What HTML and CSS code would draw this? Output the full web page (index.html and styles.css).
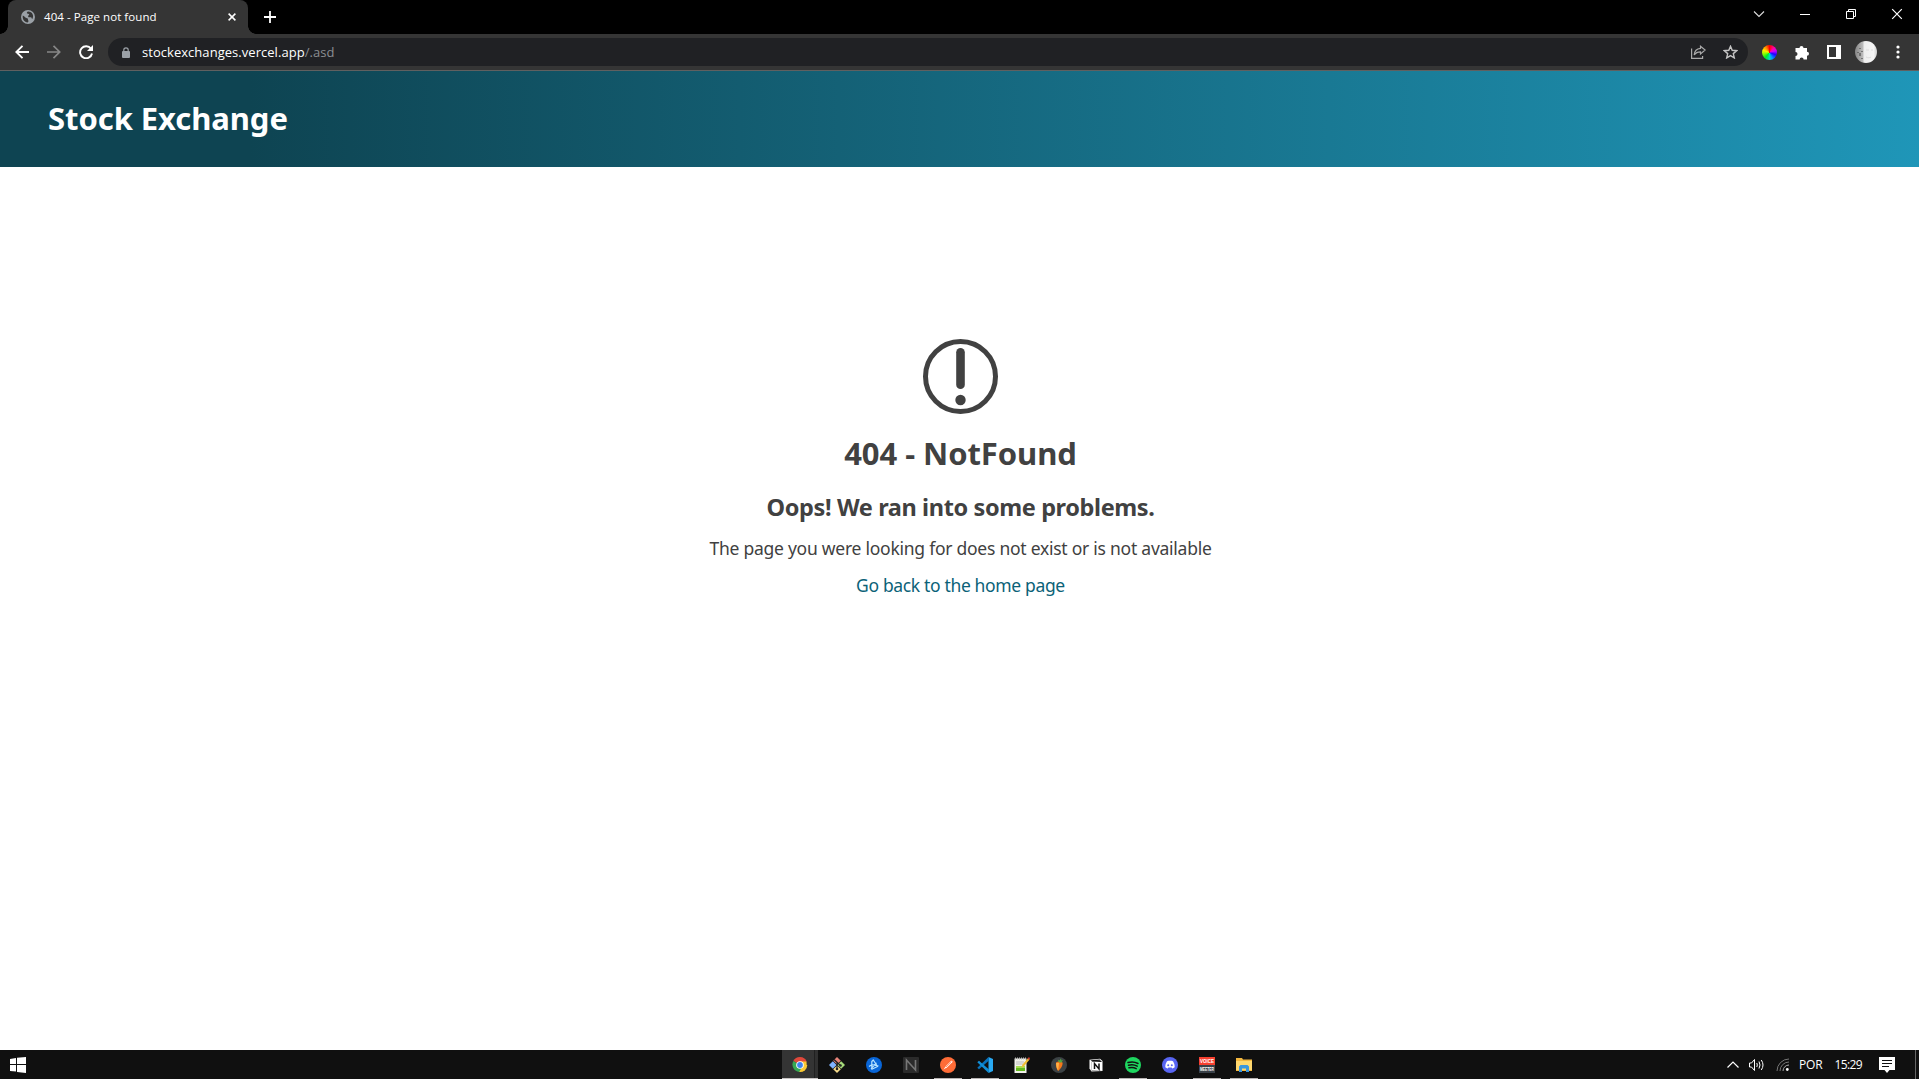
FILE: index.html
```html
<!DOCTYPE html>
<html lang="en">
<head>
<meta charset="utf-8">
<title>404 - Page not found</title>
<link rel="stylesheet" href="styles.css">
</head>
<body>
<div class="tabstrip">
  <div class="tab">
    <svg class="globe" width="14" height="14" viewBox="0 0 14 14"><circle cx="7" cy="7" r="7" fill="#9aa0a6"/><path d="M1.8 5.5C4 6.5 4.2 8 6 8.2c1.6.2.6 1.6 1.3 2.2.7.5-.3 1.5-.6 2.1C3.300 12.300 1.200 9 1.800 5.500ZM6.500 1.700c2-.4 4.300.7 5.100 2.600.8 1.800.5 3.500-.3 4.800-.7-.4-.6-1.500-1.400-1.800-1.200-.4-2.200.3-2.700-.6-.5-.9.8-1.400 1-2.200.1-.8-2.300-.5-2.400-1.500 0-.6.4-.9.7-1.300Z" fill="#353535"/></svg>
    <span class="tab-title">404 - Page not found</span>
    <svg class="tab-close" width="8" height="8" viewBox="0 0 8 8"><path d="M.6.600l6.800 6.800M7.400.600.600 7.400" stroke="#fff" stroke-width="1.500"/></svg>
  </div>
  <svg class="new-tab" width="12" height="12" viewBox="0 0 12 12"><path d="M6 0v12M0 6h12" stroke="#fff" stroke-width="1.800"/></svg>
  <div class="window-controls">
    <svg width="46" height="28" viewBox="0 0 46 28"><path d="M18 11.500l5 5 5-5" fill="none" stroke="#ddd" stroke-width="1.100"/></svg>
    <svg width="46" height="28" viewBox="0 0 46 28"><path d="M18 14.500h10" stroke="#fff"/></svg>
    <svg width="46" height="28" viewBox="0 0 46 28"><path d="M18.500 11.500h7v7h-7zM20.500 11.500v-2h7v7h-2" fill="none" stroke="#fff"/></svg>
    <svg width="46" height="28" viewBox="0 0 46 28"><path d="M18.200 9.200l9.600 9.600M27.800 9.200l-9.600 9.600" stroke="#fff" stroke-width="1.200"/></svg>
  </div>
</div>
<div class="toolbar">
  <svg width="14" height="14" viewBox="0 0 14 14"><path d="M14 7H1.500M7.500.800 1.300 7l6.200 6.200" fill="none" stroke="#fff" stroke-width="1.900"/></svg>
  <svg width="14" height="14" viewBox="0 0 14 14"><path d="M0 7h12.500M6.500.800 12.700 7l-6.200 6.200" fill="none" stroke="#878787" stroke-width="1.700"/></svg>
  <svg width="14" height="14" viewBox="0 0 14 14"><path d="M12 3.800A6 6 0 1 0 13 8.500" fill="none" stroke="#fff" stroke-width="1.900"/><path d="M14 0v6H8z" fill="#fff"/></svg>
  <div class="omnibox">
    <svg width="8" height="11" viewBox="0 0 8 11"><path d="M1.800 4.500V3a2.200 2.200 0 0 1 4.400 0v1.500" fill="none" stroke="#9aa0a6" stroke-width="1.200"/><rect y="4" width="8" height="7" rx="1" fill="#9aa0a6"/></svg>
    <span class="url">stockexchanges.vercel.app<span class="path">/.asd</span></span>
    <svg class="share" width="15" height="14" viewBox="0 0 15 14"><path d="M.6 3.500v9.900h11V11" fill="none" stroke="#aaa" stroke-width="1.200"/><path d="M9.500 1.200 14.200 5 9.500 8.900V6.800C6.500 6.800 4.700 7.600 3.200 10 3.500 6.200 5.600 3.600 9.500 3.300z" fill="none" stroke="#aaa" stroke-width="1.200"/></svg>
    <svg width="15" height="14" viewBox="0 0 15 14"><path d="M7.500 1.300l1.700 4 4.400.4-3.300 2.900 1 4.300-3.800-2.300-3.800 2.300 1-4.300-3.300-2.900 4.400-.4z" fill="none" stroke="#c4c4c4" stroke-width="1.400"/></svg>
  </div>
  <div class="extensions">
    <div class="wheel"></div>
    <svg class="puzzle" width="15" height="15" viewBox="0 0 15 15"><path d="M1 3h3.500a2 2 0 1 1 4 0H12v3.800a2 2 0 1 1 0 4V14.500H8.600a2 2 0 0 0-4 0H.500v-3.600a2 2 0 0 0 0-4V3z" fill="#fff"/></svg>
    <svg class="panel" width="14" height="14" viewBox="0 0 14 14"><path fill="#fff" fill-rule="evenodd" d="M0 0h14v14H0zM2 2v10h7V2z"/></svg>
    <svg class="avatar" width="22" height="22" viewBox="0 0 22 22"><defs><linearGradient id="face"><stop stop-color="#858585"/><stop offset=".35" stop-color="#bbb"/><stop offset=".42" stop-color="#eee"/><stop offset=".85" stop-color="#f6f6f6"/><stop offset="1" stop-color="#ccc"/></linearGradient></defs><circle cx="11" cy="11" r="11" fill="url(#face)"/><path d="M5 7v1M5 12v3M7 17v1M3 11v1M7 10v1" stroke="#555" stroke-width="1.300"/><path d="M11 9h3M16 9h2M11 16c2 1 4 1 5 0" stroke="#ddd" fill="none"/></svg>
    <svg width="4" height="14" viewBox="0 0 4 14" fill="#fff"><circle cx="2" cy="2" r="1.600"/><circle cx="2" cy="7" r="1.600"/><circle cx="2" cy="12" r="1.600"/></svg>
  </div>
</div>
<header class="site-header"><span class="brand">Stock Exchange</span></header>
<main class="content">
  <svg width="75" height="75" viewBox="0 0 75 75"><circle cx="37.500" cy="37.500" r="35" fill="none" stroke="#414141" stroke-width="5"/><rect x="33.200" y="9" width="8.600" height="41" rx="4.300" fill="#414141"/><circle cx="37.500" cy="61" r="5.200" fill="#414141"/></svg>
  <h1 class="code">404 - NotFound</h1>
  <h2 class="oops">Oops! We ran into some problems.</h2>
  <p class="detail">The page you were looking for does not exist or is not available</p>
  <a class="home-link">Go back to the home page</a>
</main>
<footer class="taskbar">
  <svg class="start" width="16" height="16" viewBox="0 0 16 16" fill="#fff"><path d="M0 2l6-1v6H0zM7 .800 16 0v7H7zM0 8h6v6.500L0 14zM7 8h9v8l-9-1z"/></svg>
  <div class="apps">
    <div class="app active"><svg width="16" height="16" viewBox="0 0 16 16"><path d="M8 8 1.300 4A7.500 7.500 0 0 1 14.700 4.500z" fill="#e0483b"/><path d="M8 8h7.200A7 7 0 0 1 7 15z" fill="#fbc934"/><path d="M8 8H14.700L14.500 4.500H8z" fill="#fbc934"/><path d="M8 8 1.300 4A7.500 7.500 0 0 0 7.200 15L10 10z" fill="#37a853"/><circle cx="8" cy="8" r="3.800" fill="#fff"/><circle cx="8" cy="8" r="2.900" fill="#3f84ee"/></svg></div>
    <div class="app"><svg width="16" height="16" viewBox="0 0 16 16"><path d="M8 0l3.800 3.800L8 7.600 4.200 3.800z" fill="#e78379"/><path d="M3.800 4.200 7.600 8l-3.800 3.800L0 8z" fill="#80b3ff"/><path d="M12.200 4.200 16 8l-3.800 3.800L8.400 8z" fill="#a6d979"/><path d="M8 8.400l3.800 3.800L8 16l-3.800-3.800z" fill="#f7dc8b"/><path d="M5 2.500 11.500 8.500M8 5v7" stroke="#222" stroke-width="1.300"/><circle cx="8" cy="12" r="1.300" fill="#222"/><circle cx="11.500" cy="8.500" r="1.300" fill="#222"/></svg></div>
    <div class="app"><svg width="16" height="16" viewBox="0 0 16 16"><circle cx="8" cy="8" r="8" fill="#0966d8"/><path d="M5.800 12.200V4.500L7.300 3l4.200 6.500zM3 9.500l2.800-1.800 6.700 1.300M5 11.800l5.500-6" fill="none" stroke="#b9e4ff" stroke-width="1.200" stroke-linejoin="round"/></svg></div>
    <div class="app"><svg width="16" height="16" viewBox="0 0 16 16"><rect width="16" height="16" rx="1" fill="#2b2b2b"/><path d="M3.500 13V3l9 10V3" fill="none" stroke="#777" stroke-width="1.600"/></svg></div>
    <div class="app open"><svg width="16" height="16" viewBox="0 0 16 16"><circle cx="8" cy="8" r="8" fill="#ff6c37"/><path d="M3.500 12.500 6 9l5-5c1-.8 2 .2 1.300 1.200L7.200 10.200z" fill="#fff"/><path d="M6 10l5.500-5.300" stroke="#ff6c37" stroke-width=".7"/></svg></div>
    <div class="app open"><svg width="16" height="16" viewBox="0 0 16 16"><path d="M11.500 0 16 2v12l-4.500 2z" fill="#29a9f2"/><path d="M12 3.500 2 12.200.300 10.700 11.500 0z" fill="#0873bd"/><path d="M12 12.500 2 3.800.300 5.300 11.500 16z" fill="#118fd7"/></svg></div>
    <div class="app"><svg width="16" height="16" viewBox="0 0 16 16"><path d="M.5 1.500h12V16H.500z" fill="#f1f1e9"/><path d="M1 1.500h12" stroke="#bbb" stroke-width="2" stroke-dasharray="1 1"/><path d="M2 5h8M2 7h7" stroke="#bbb"/><path d="M2 9h9v5H2z" fill="#62b91d"/><path d="M2 9h9v2H2z" fill="#a8dc52"/><path d="M7.500 10.500l1-3L14 1.200l1.600 1.400L10 9.200z" fill="#efbd32"/><path d="M13.500 1.500 15 0l1 1.500-1 1.500z" fill="#c7372c"/></svg></div>
    <div class="app"><svg width="16" height="16" viewBox="0 0 16 16"><circle cx="8" cy="8" r="8" fill="#3c4245"/><path d="M5 5.500C6.500 4 10 4 11.500 5.500c.6 3-2 6.500-4.500 8.500-1.500-2-2.500-6-2-8.500z" fill="#f5781b"/><path d="M5.200 6c-.3 3 .8 6 2 7.500L8 6z" fill="#ffb347"/><path d="M8 5.500 6.800 2.500 8.500 3.500 10 1.500l.3 2 1.700-.5-1.500 2.500z" fill="#52a843"/></svg></div>
    <div class="app"><svg width="14" height="14" viewBox="0 0 14 14"><path d="M.5 1.800.500 10.500 2.500 13.500l11-.5V3L11 .800z" fill="#fff"/><path d="M2.800 3.500 12.500 3v9.200l-9.700.5z" fill="#111"/><path d="M3 4h10v8.500H3z" fill="#fff"/><path d="M1.500 2.300 10.700 1.500 12 2.700 3 3.200z" fill="#111"/><path d="M5.500 11V5.500L10 11V5.500" fill="none" stroke="#111" stroke-width="1.500"/></svg></div>
    <div class="app open"><svg width="16" height="16" viewBox="0 0 16 16"><circle cx="8" cy="8" r="8" fill="#1ed760"/><path d="M3 5.500c3.500-1 7-.7 10 1M3.500 8.200c3-.9 6-.6 8.700.9M4 10.800c2.500-.7 5-.5 7.200.8" fill="none" stroke="#111" stroke-width="1.500" stroke-linecap="round"/></svg></div>
    <div class="app"><svg width="16" height="16" viewBox="0 0 16 16"><circle cx="8" cy="8" r="8" fill="#5865f2"/><path d="M5 4.300c2-.6 4-.6 6 0 1.200 1.800 1.800 3.800 1.700 6-.8.7-1.600 1-2.400 1.200l-.7-1H6.400l-.7 1c-.8-.2-1.600-.5-2.400-1.200-.1-2.200.5-4.200 1.700-6z" fill="#fff"/><circle cx="6.200" cy="8.200" r="1" fill="#5865f2"/><circle cx="9.800" cy="8.200" r="1" fill="#5865f2"/></svg></div>
    <div class="app open"><svg class="voice" width="16" height="16" viewBox="0 0 16 16"><path d="M0 0h16v8H0z" fill="#f6402f"/><path d="M0 8h16v8H0z" fill="#3a4148"/><text x="1" y="5.800" textLength="14" lengthAdjust="spacingAndGlyphs">VOICE</text><text x="1" y="13.800" textLength="14" lengthAdjust="spacingAndGlyphs">MEETER</text></svg></div>
    <div class="app open"><svg width="16" height="14" viewBox="0 0 16 14"><path d="M0 0h6l1 1.500h9V13H0z" fill="#f4b83f"/><path d="M0 3h16v9H0z" fill="#ffd86f"/><path d="M3 14V8.500L4.500 7h7L13 8.500V14h-3v-3.500H6V14z" fill="#3b97de"/></svg></div>
  </div>
  <div class="tray">
    <svg width="12" height="7" viewBox="0 0 12 7"><path d="M.5 6.500 6 1l5.500 5.500" fill="none" stroke="#fff" stroke-width="1.200"/></svg>
    <svg width="17" height="14" viewBox="0 0 17 14" fill="none" stroke="#fff"><path d="M.5 5v4H2.500l3 3.500V1.500L2.500 5z"/><path d="M7.800 5q1 2 0 4M10 3.500q2 3.500 0 7M12.300 2q3.400 5 0 10"/></svg>
    <svg width="13" height="13" viewBox="0 0 13 13" fill="none"><path d="M1 13A12 12 0 0 1 13 1M4 13a9 9 0 0 1 9-9" stroke="#777"/><path d="M7 13a6 6 0 0 1 6-6" stroke="#aaa"/><circle cx="11.300" cy="11.500" r="1.400" fill="#fff"/></svg>
    <span class="lang">POR</span>
    <span class="clock">15:29</span>
    <svg width="16" height="16" viewBox="0 0 16 16"><path d="M0 0h16v13h-5.500L8 16 5.500 13H0z" fill="#fff"/><path d="M3 3.500h10M3 6.500h10M3 9.500h7" stroke="#111"/></svg>
    <div class="show-desktop"></div>
  </div>
</footer>
</body>
</html>
```
FILE: styles.css
```css
* { box-sizing: border-box; }
body { margin: 0; height: 1079px; display: flex; flex-direction: column; overflow: hidden; background: #fff; font-family: "Open Sans", "Noto Sans", sans-serif; white-space: nowrap; }
svg { display: block; flex: none; }
.tabstrip { height: 34px; background: #000; display: flex; padding-left: 8px; }
.tab { position: relative; width: 240px; height: 34px; background: #353535; border-radius: 8px 8px 0 0; display: flex; align-items: center; padding: 0 12px 0 13px; }
.tab::before, .tab::after { content: ""; position: absolute; bottom: 0; width: 8px; height: 8px; }
.tab::before { left: -8px; background: radial-gradient(circle at 0 0, #000 7.5px, #353535 8px); }
.tab::after { right: -8px; background: radial-gradient(circle at 100% 0, #000 7.5px, #353535 8px); }
.tab-title { margin-left: 9px; padding-bottom: 2px; color: #fff; font-size: 11.5px; letter-spacing: .06px; }
.tab-close { margin-left: auto; }
.new-tab { margin: 11px 0 0 16px; }
.window-controls { margin: 0 -1px 0 auto; display: flex; }
.toolbar { height: 37px; background: #353535; border-bottom: 1px solid #606060; display: flex; align-items: center; padding: 0 19px 0 15px; gap: 18px; }
.omnibox { flex: 1; height: 28px; margin-left: -3px; border-radius: 14px; background: #202124; display: flex; align-items: center; padding: 0 10px 0 14px; }
.url { margin-left: 12px; color: #fff; font-size: 13px; letter-spacing: .04px; }
.path { color: #8b8e92; }
.share { margin: 0 17px 0 auto; }
.extensions { display: flex; align-items: center; margin-left: -4px; }
.puzzle { margin: 0 17px 0 18px; }
.avatar { margin: 0 19px 0 14px; }
.wheel { width: 15px; height: 15px; border-radius: 50%; background: conic-gradient(#f00, #f0a 45deg, #c0f 75deg, #20f 110deg, #09f 155deg, #0db 180deg, #0e2 220deg, #9f0 260deg, #fe0 290deg, #f80 325deg, #f00); }
.site-header { height: 96px; padding: 0 48px 2px; display: flex; align-items: center; background: linear-gradient(90deg, #0e4452 13%, #1f96b8); }
.brand { color: #fff; font: 700 31px/40px "Noto Sans", sans-serif; letter-spacing: -.07px; }
.content { flex: 1; padding: 172px 0 0 2px; display: flex; flex-direction: column; align-items: center; font-family: "Noto Sans", sans-serif; color: #414141; }
.code { margin: 19px 0; font-size: 31px; line-height: 40px; letter-spacing: -.07px; }
.oops { margin: 0 0 14px; font-size: 23.5px; line-height: 30px; letter-spacing: -.38px; }
.detail { margin: 0 0 13px; font-size: 17.5px; line-height: 24px; letter-spacing: -.25px; }
.home-link { font-size: 17.5px; line-height: 24px; letter-spacing: -.35px; color: #0b6278; }
.taskbar { height: 29px; background: #101010; display: flex; align-items: center; padding-left: 10px; }
.apps { display: flex; height: 29px; margin-left: 756px; gap: 9px; }
.app { width: 28px; height: 29px; display: flex; align-items: center; justify-content: center; border-bottom: 1px solid transparent; padding-top: 1px; }
.open { border-color: #b8b4b4; }
.active { width: 36px; margin-right: -4px; border-color: #c8c4c4; background: linear-gradient(90deg, #343434 32px, #202020 32px 33px, #303030 33px); }
.voice { overflow: visible; fill: #fff; font: 700 5px "Liberation Sans", sans-serif; }
.tray { margin-left: auto; height: 29px; display: flex; align-items: center; color: #fff; font-size: 12px; }
.tray svg { margin-right: 10px; }
.lang { margin-right: 12px; letter-spacing: -.2px; }
.clock { margin-right: 17px; letter-spacing: -.6px; }
.show-desktop { width: 4px; height: 29px; margin-left: 10px; border-left: 1px solid #666; }
```
